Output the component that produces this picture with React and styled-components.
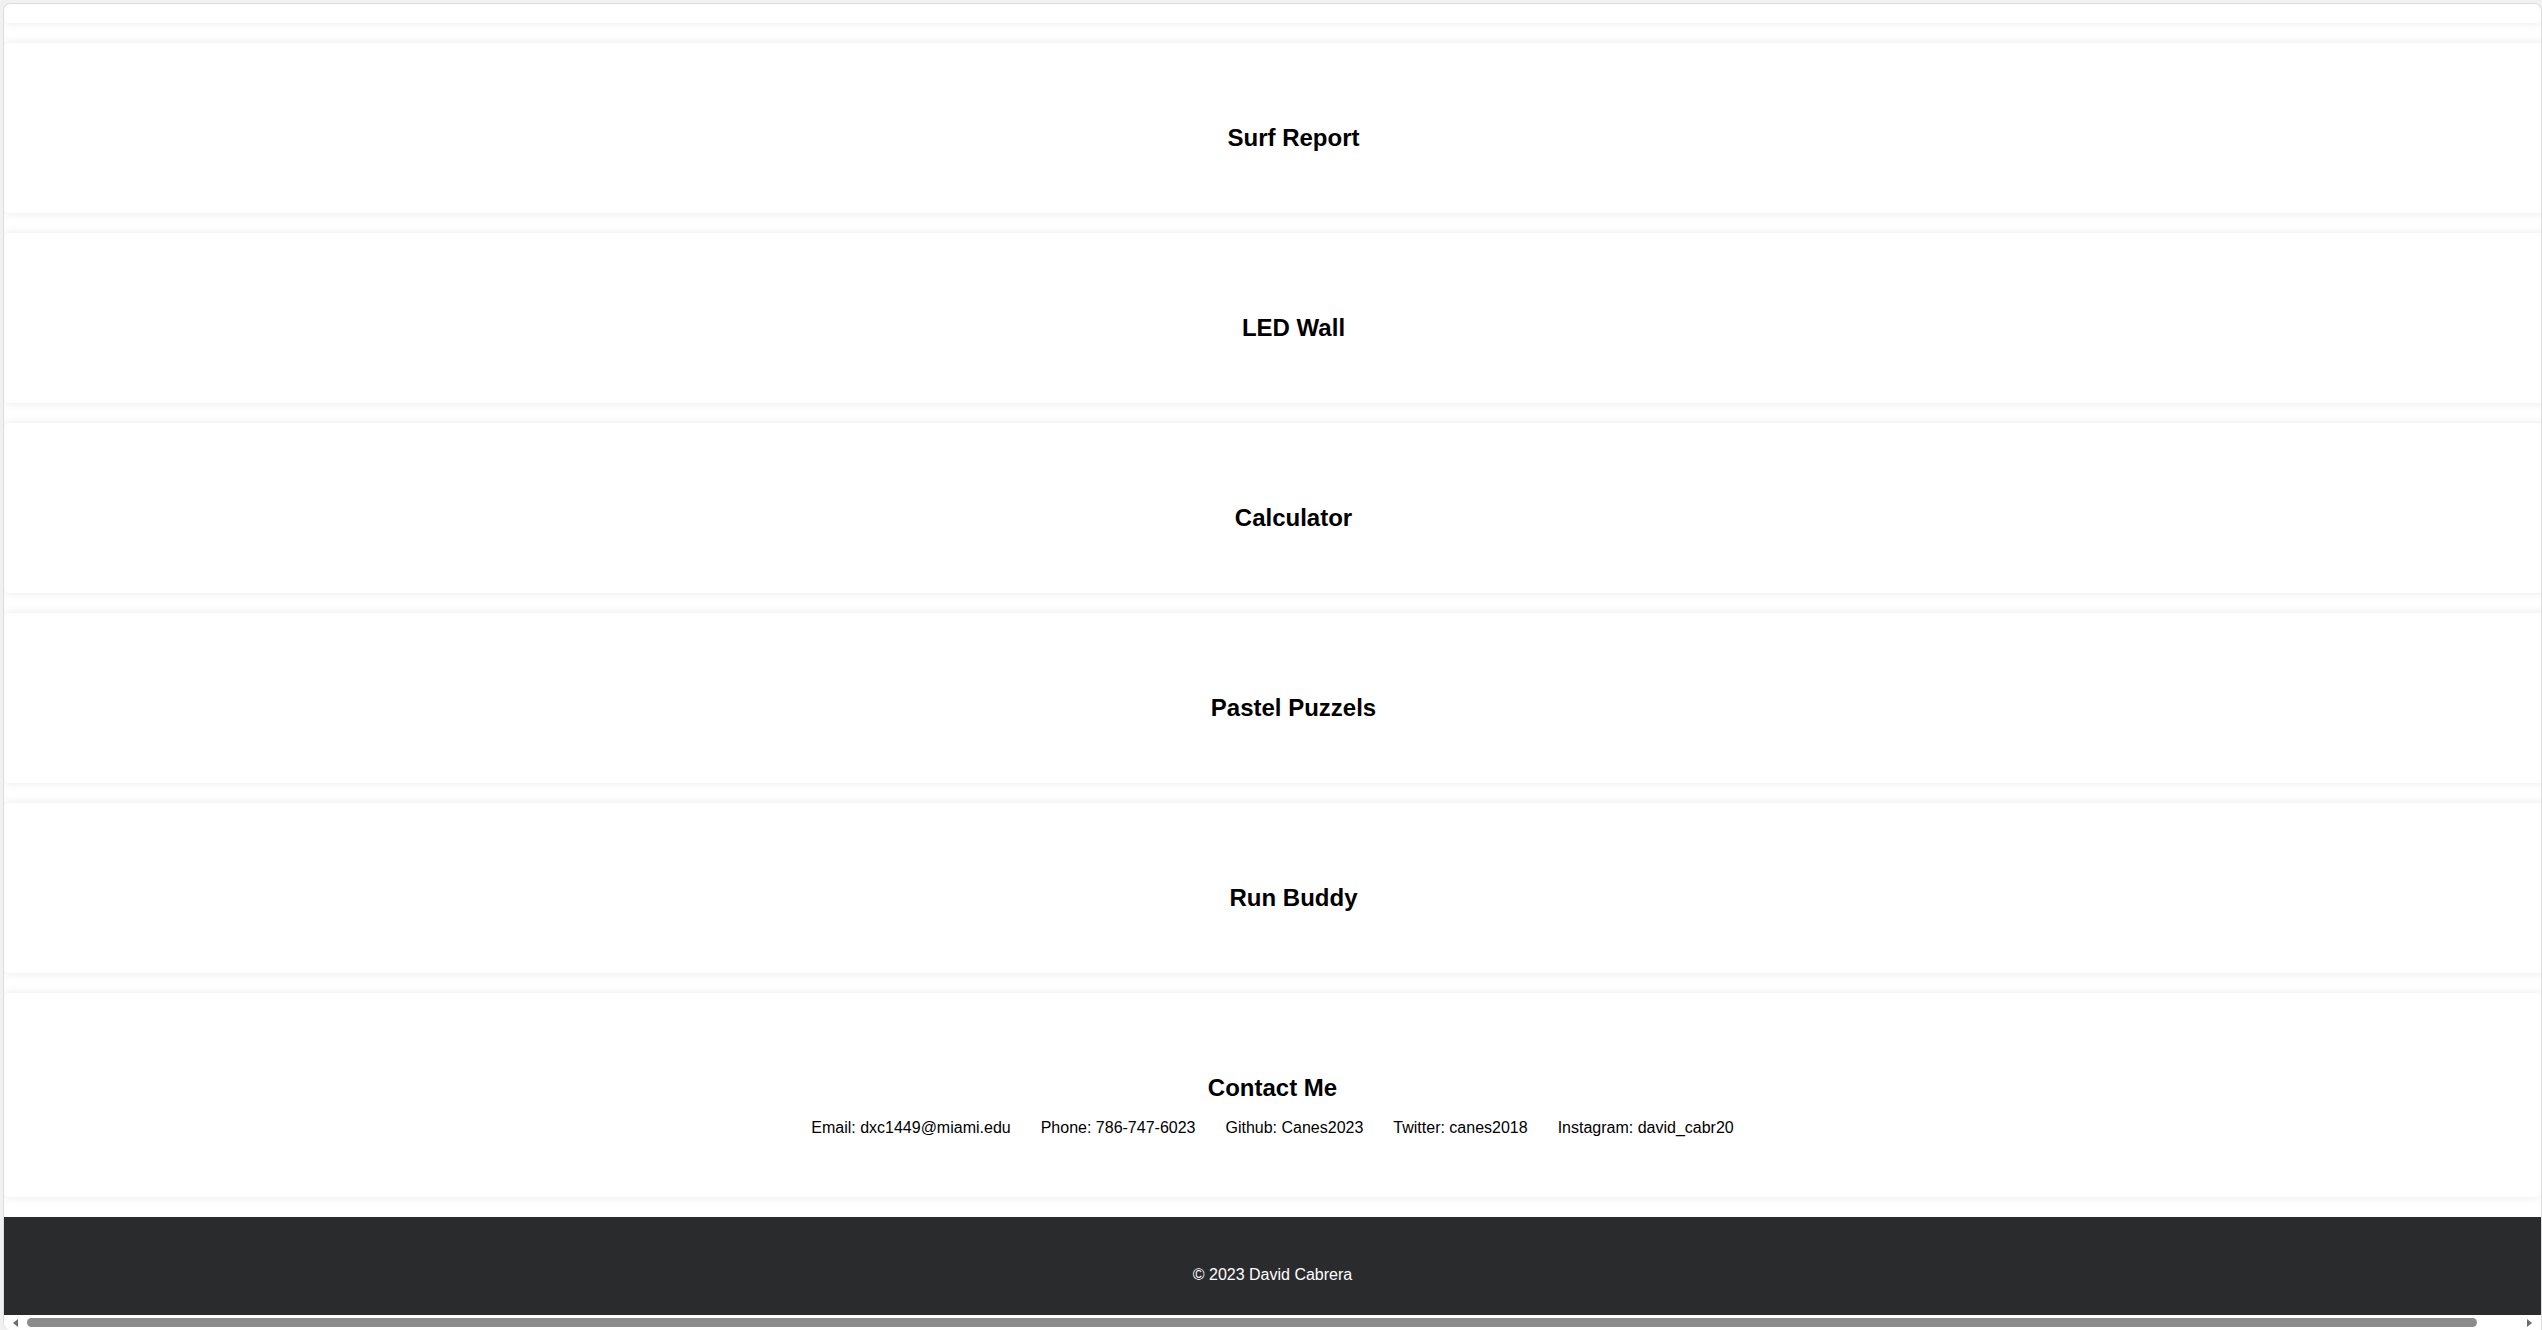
import React from 'react'
import styled, { createGlobalStyle } from 'styled-components'

const projects = ['Surf Report', 'LED Wall', 'Calculator', 'Pastel Puzzels', 'Run Buddy']

const contacts = [
    'Email: dxc1449@miami.edu',
    'Phone: 786-747-6023',
    'Github: Canes2023',
    'Twitter: canes2018',
    'Instagram: david_cabr20',
]

const GlobalStyle = createGlobalStyle`
    html, body {
        margin: 0;
        padding: 0;
        overflow: hidden;
        background: #f1f1f1;
        font-family: "Liberation Sans", Arial, sans-serif;
    }
`

const App = () => {
    return (
        <>
            <GlobalStyle />
            <Window>
                <Viewport>
                    <Stub />
                    {
                        projects.map(name => (
                            <ProjectCard key={name}>
                                <h2>{name}</h2>
                            </ProjectCard>
                        ))
                    }
                    <ContactCard>
                        <h2>Contact Me</h2>
                        <ContactList>
                            {contacts.map(item => <li key={item}>{item}</li>)}
                        </ContactList>
                    </ContactCard>
                    <Footer>
                        <p>© 2023 David Cabrera</p>
                    </Footer>
                </Viewport>
                <Scrollbar>
                    <Arrow $dir="left" />
                    <Track>
                        <Thumb />
                    </Track>
                    <Arrow $dir="right" />
                </Scrollbar>
            </Window>
        </>
    )
}

export default App

const Window = styled.div`
    box-sizing: border-box;
    margin: 3px 0 0 3px;
    width: 2539px;
    height: 1327px;
    border: 1px solid #dcdcdc;
    border-bottom: none;
    border-radius: 8px 8px 0 8px;
    background: #ffffff;
    overflow: hidden;
    display: flex;
    flex-direction: column;
`

const Viewport = styled.main`
    flex: 1;
    min-height: 0;
    overflow: hidden;
    display: flex;
    flex-direction: column;
    gap: 20px;
`

const Card = styled.section`
    flex: none;
    box-sizing: border-box;
    background: #ffffff;
    border-radius: 5px;
    box-shadow: 0 0 10px rgba(0, 0, 0, 0.09);
    text-align: center;

    h2 {
        margin: 20px 0;
        font-size: 24px;
        font-weight: 700;
        color: #000000;
    }
`

const Stub = styled(Card)`
    height: 19px;
    border-radius: 0 0 5px 5px;
`

const ProjectCard = styled(Card)`
    width: calc(100% + 42px);
    height: 170px;
    padding: 61px 0 42px;
`

const ContactCard = styled(Card)`
    height: 204px;
    padding-top: 61px;

    h2 {
        margin-bottom: 17px;
    }
`

const ContactList = styled.ul`
    list-style: none;
    margin: 0;
    padding: 0;
    display: flex;
    justify-content: center;
    gap: 30px;

    li {
        font-size: 16px;
        color: #000000;
        line-height: 18px;
    }
`

const Footer = styled.footer`
    flex: none;
    height: 98px;
    box-sizing: border-box;
    padding-top: 49px;
    background: #2a2b2d;
    text-align: center;

    p {
        margin: 0;
        font-size: 16px;
        color: #ffffff;
    }
`

const Scrollbar = styled.div`
    flex: none;
    height: 15px;
    padding: 0 9px;
    display: flex;
    align-items: center;
    background: #ffffff;
`

const Arrow = styled.span`
    width: 0;
    height: 0;
    border-top: 4.5px solid transparent;
    border-bottom: 4.5px solid transparent;
    ${props => props.$dir === 'left'
        ? 'border-right: 5px solid #6e6e6e;'
        : 'border-left: 5px solid #6e6e6e;'}
`

const Track = styled.div`
    flex: 1;
    padding: 0 9px;
    display: flex;
    align-items: center;
`

const Thumb = styled.div`
    width: calc(100% - 41px);
    height: 9px;
    border-radius: 4.5px;
    background: #8c8c8c;
`
